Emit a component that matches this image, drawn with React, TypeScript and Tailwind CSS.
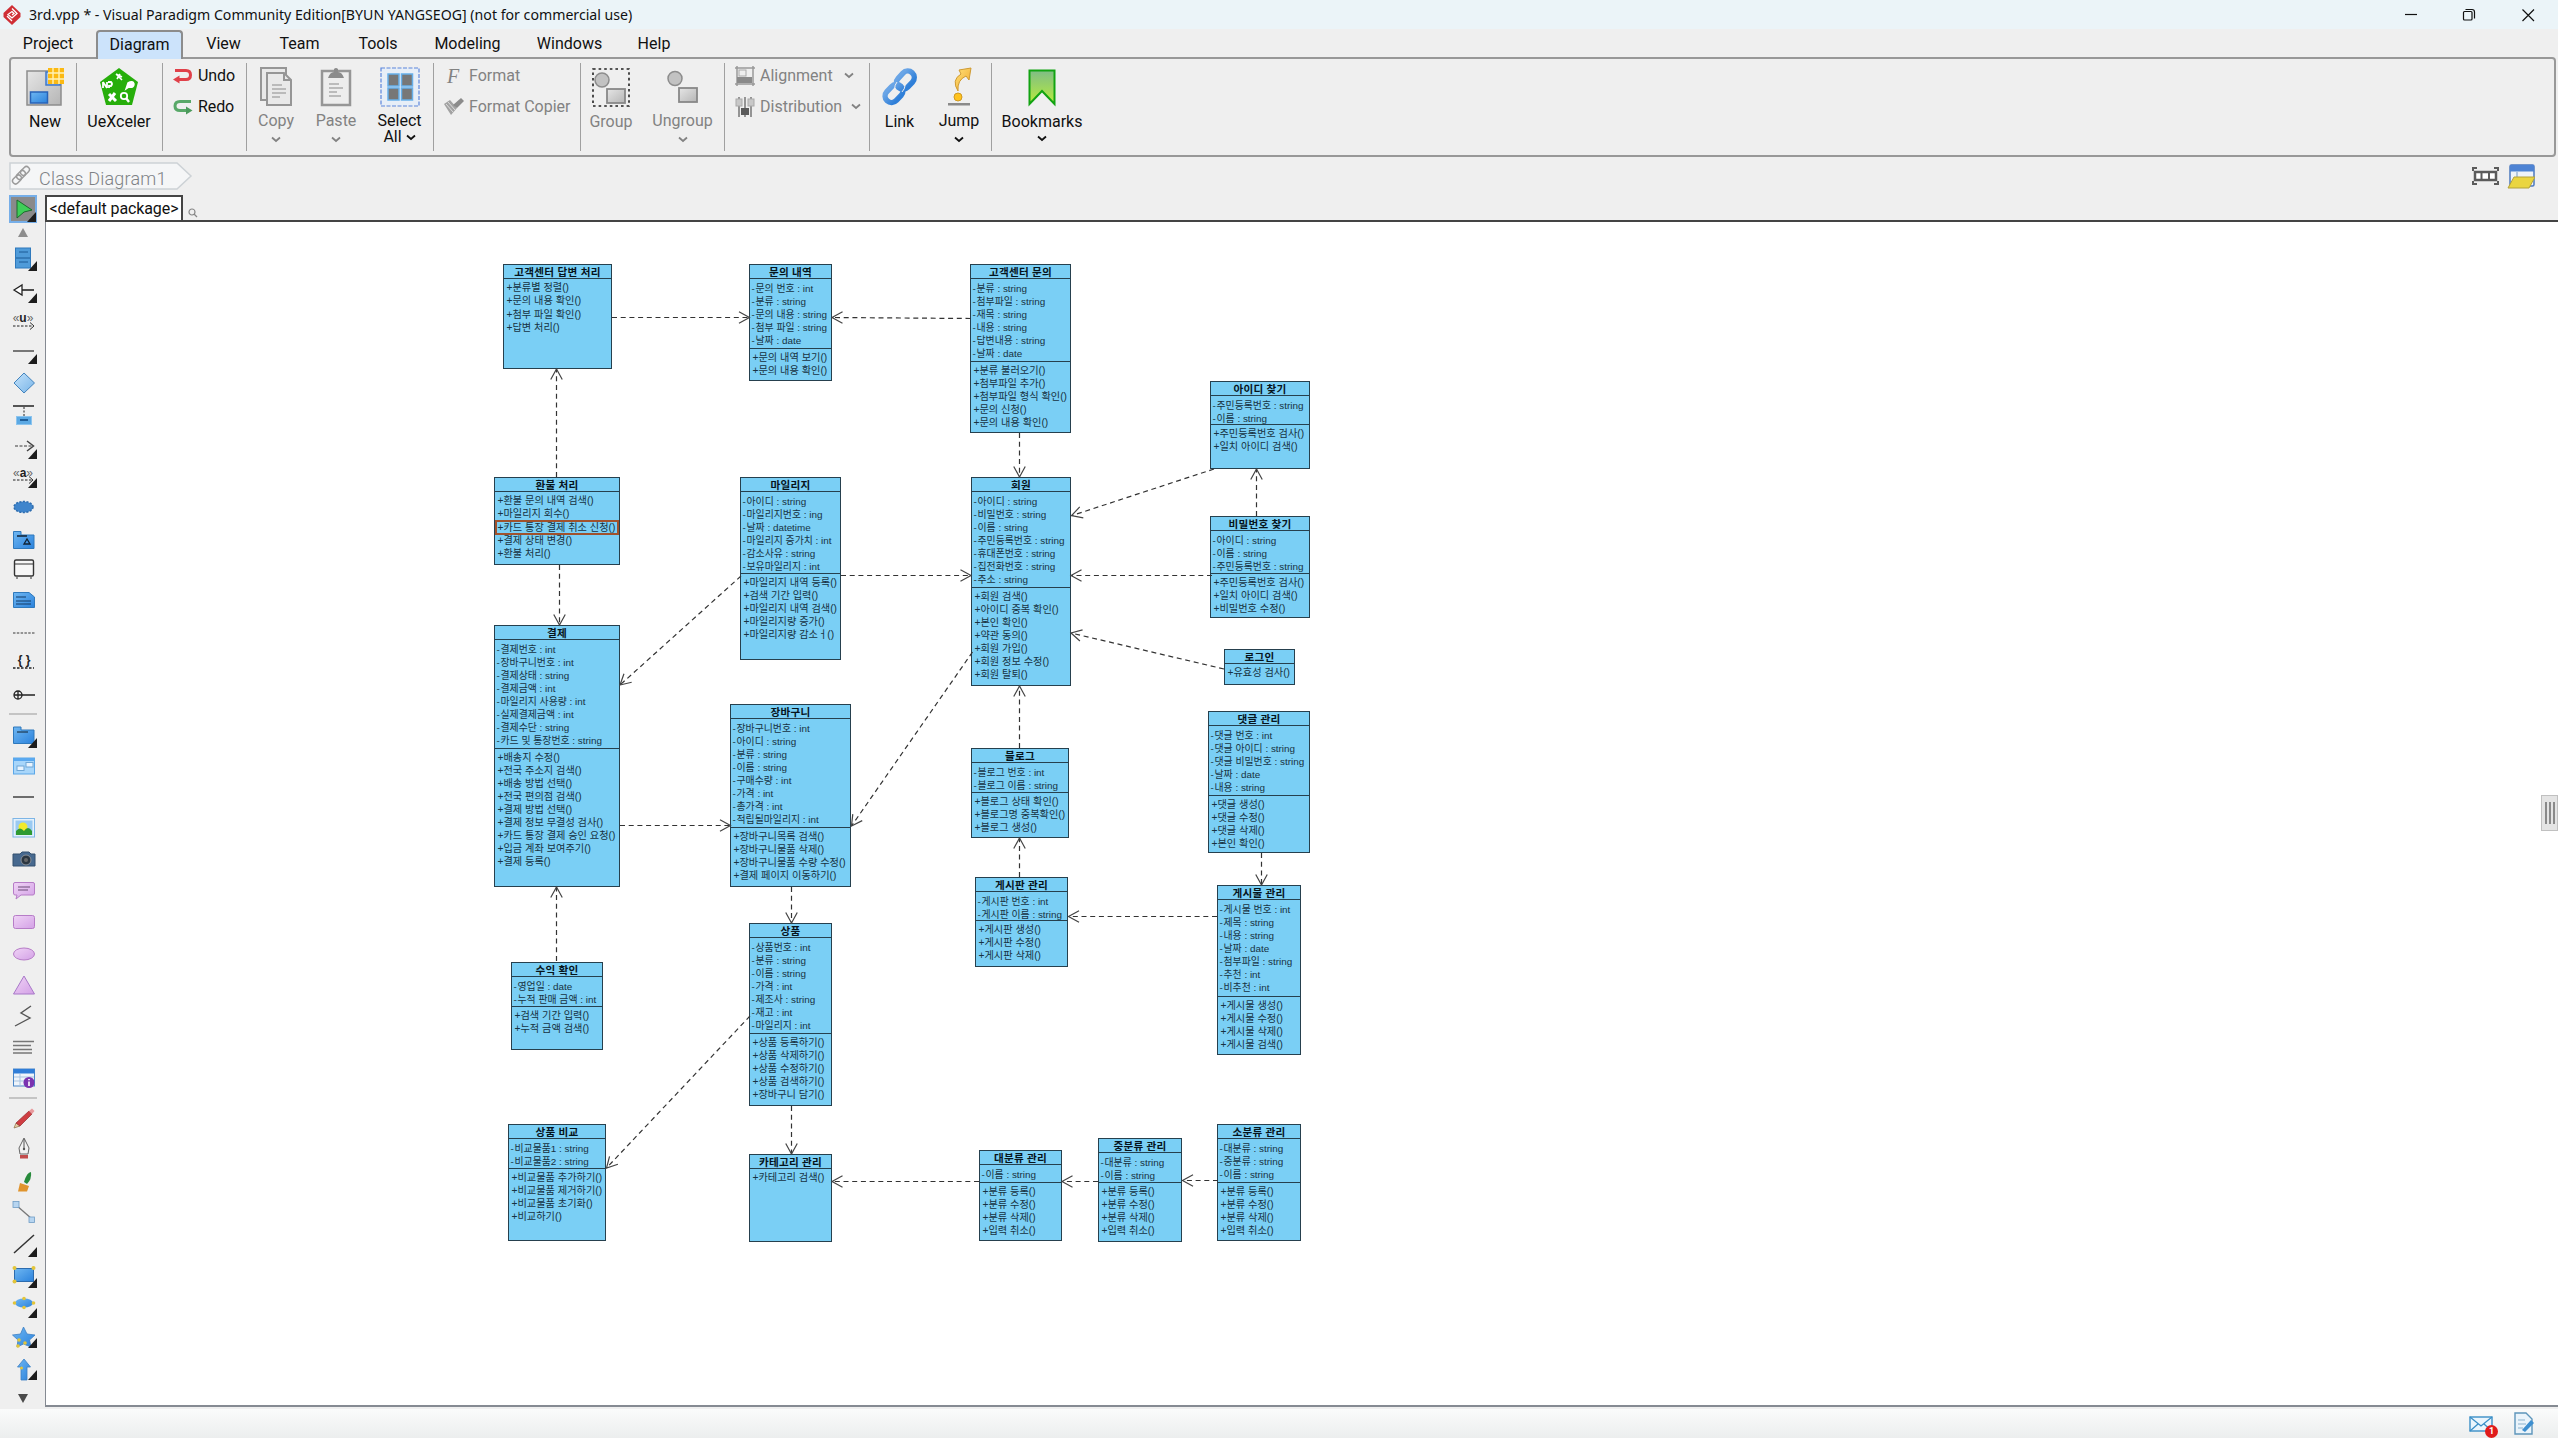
import type { ReactNode } from "react";

/* ---------- Class diagram data ---------- */

type Cls = {
  x: number; y: number; r: number; b: number; sep?: number;
  title: string; attrs: string[]; ops: string[]; selected?: number;
};

const classes: Cls[] = [
  { x: 502.7, y: 264, r: 612.3, b: 368.7, title: "고객센터 답변 처리", attrs: [], ops: ["분류별 정렬()", "문의 내용 확인()", "첨부 파일 확인()", "답변 처리()"] },
  { x: 749.3, y: 264, r: 832, b: 381, sep: 348.3, title: "문의 내역", attrs: ["문의 번호 : int", "분류 : string", "문의 내용 : string", "첨부 파일 : string", "날짜 : date"], ops: ["문의 내역 보기()", "문의 내용 확인()"] },
  { x: 494, y: 477, r: 619.7, b: 564.7, title: "환불 처리", attrs: [], ops: ["환불 문의 내역 검색()", "마일리지 회수()", "카드 통장 결제 취소 신청()", "결제 상태 변경()", "환불 처리()"], selected: 2 },
  { x: 740.3, y: 477, r: 841, b: 659.7, sep: 573.3, title: "마일리지", attrs: ["아이디 : string", "마일리지번호 : ing", "날짜 : datetime", "마일리지 증가치 : int", "감소사유 : string", "보유마일리지 : int"], ops: ["마일리지 내역 등록()", "검색 기간 입력()", "마일리지 내역 검색()", "마일리지량 증가()", "마일리지량 감소ㅓ()"] },
  { x: 494, y: 625.3, r: 619.7, b: 887, sep: 748.3, title: "결제", attrs: ["결제번호 : int", "장바구니번호 : int", "결제상태 : string", "결제금액 : int", "마일리지 사용량 : int", "실제결제금액 : int", "결제수단 : string", "카드 및 통장번호 : string"], ops: ["배송지 수정()", "전국 주소지 검색()", "배송 방법 선택()", "전국 편의점 검색()", "결제 방법 선택()", "결제 정보 무결성 검사()", "카드 통장 결제 승인 요청()", "입금 계좌 보여주기()", "결제 등록()"] },
  { x: 730.3, y: 704.3, r: 851, b: 887, sep: 826.7, title: "장바구니", attrs: ["장바구니번호 : int", "아이디 : string", "분류 : string", "이름 : string", "구매수량 : int", "가격 : int", "총가격 : int", "적립될마일리지 : int"], ops: ["장바구니목록 검색()", "장바구니물품 삭제()", "장바구니물품 수량 수정()", "결제 페이지 이동하기()"] },
  { x: 511.3, y: 961.7, r: 603.3, b: 1049.7, sep: 1005.7, title: "수익 확인", attrs: ["영업일 : date", "누적 판매 금액 : int"], ops: ["검색 기간 입력()", "누적 금액 검색()"] },
  { x: 749.3, y: 922.7, r: 832, b: 1105.7, sep: 1033.3, title: "상품", attrs: ["상품번호 : int", "분류 : string", "이름 : string", "가격 : int", "제조사 : string", "재고 : int", "마일리지 : int"], ops: ["상품 등록하기()", "상품 삭제하기()", "상품 수정하기()", "상품 검색하기()", "장바구니 담기()"] },
  { x: 970.3, y: 264, r: 1071, b: 433.3, sep: 360.7, title: "고객센터 문의", attrs: ["분류 : string", "첨부파일 : string", "재목 : string", "내용 : string", "답변내용 : string", "날짜 : date"], ops: ["분류 불러오기()", "첨부파일 추가()", "첨부파일 형식 확인()", "문의 신청()", "문의 내용 확인()"] },
  { x: 971.3, y: 477, r: 1071, b: 685.7, sep: 586.7, title: "회원", attrs: ["아이디 : string", "비밀번호 : string", "이름 : string", "주민등록번호 : string", "휴대폰번호 : string", "집전화번호 : string", "주소 : string"], ops: ["회원 검색()", "아이디 중복 확인()", "본인 확인()", "약관 동의()", "회원 가입()", "회원 정보 수정()", "회원 탈퇴()"] },
  { x: 1210.3, y: 380.7, r: 1309.7, b: 468.7, sep: 424.3, title: "아이디 찾기", attrs: ["주민등록번호 : string", "이름 : string"], ops: ["주민등록번호 검사()", "일치 아이디 검색()"] },
  { x: 1210.3, y: 515.7, r: 1309.7, b: 618.3, sep: 573.3, title: "비밀번호 찾기", attrs: ["아이디 : string", "이름 : string", "주민등록번호 : string"], ops: ["주민등록번호 검사()", "일치 아이디 검색()", "비밀번호 수정()"] },
  { x: 1223.7, y: 649.3, r: 1294.7, b: 684.7, title: "로그인", attrs: [], ops: ["유효성 검사()"] },
  { x: 1207.7, y: 710.7, r: 1309.7, b: 853, sep: 794.7, title: "댓글 관리", attrs: ["댓글 번호 : int", "댓글 아이디 : string", "댓글 비밀번호 : string", "날짜 : date", "내용 : string"], ops: ["댓글 생성()", "댓글 수정()", "댓글 삭제()", "본인 확인()"] },
  { x: 1217.3, y: 885.2, r: 1300.7, b: 1054.5, sep: 995.7, title: "게시물 관리", attrs: ["게시물 번호 : int", "제목 : string", "내용 : string", "날짜 : date", "첨부파일 : string", "추천 : int", "비추천 : int"], ops: ["게시물 생성()", "게시물 수정()", "게시물 삭제()", "게시물 검색()"] },
  { x: 971.3, y: 748, r: 1069.3, b: 838.2, sep: 791.6, title: "블로그", attrs: ["블로그 번호 : int", "블로그 이름 : string"], ops: ["블로그 상태 확인()", "블로그명 중복확인()", "블로그 생성()"] },
  { x: 975, y: 876.8, r: 1068.3, b: 967, sep: 920.4, title: "게시판 관리", attrs: ["게시판 번호 : int", "게시판 이름 : string"], ops: ["게시판 생성()", "게시판 수정()", "게시판 삭제()"] },
  { x: 507.7, y: 1124, r: 606.3, b: 1241, sep: 1168.3, title: "상품 비교", attrs: ["비교물품1 : string", "비교물품2 : string"], ops: ["비교물품 추가하기()", "비교물품 제거하기()", "비교물품 초기화()", "비교하기()"] },
  { x: 749.3, y: 1154.3, r: 832, b: 1242.3, title: "카테고리 관리", attrs: [], ops: ["카테고리 검색()"] },
  { x: 979, y: 1150, r: 1062, b: 1240.6, sep: 1181.5, title: "대분류 관리", attrs: ["이름 : string"], ops: ["분류 등록()", "분류 수정()", "분류 삭제()", "입력 취소()"] },
  { x: 1098, y: 1138, r: 1182.3, b: 1241.6, sep: 1181.5, title: "중분류 관리", attrs: ["대분류 : string", "이름 : string"], ops: ["분류 등록()", "분류 수정()", "분류 삭제()", "입력 취소()"] },
  { x: 1217.3, y: 1123.7, r: 1300.7, b: 1240.6, sep: 1181.5, title: "소분류 관리", attrs: ["대분류 : string", "중분류 : string", "이름 : string"], ops: ["분류 등록()", "분류 수정()", "분류 삭제()", "입력 취소()"] },
];

/* Dependencies as [fromX, fromY, toX, toY]; the open arrowhead is at the end. */
const links: [number, number, number, number][] = [
  [612, 317.5, 749.5, 317.5], [970.5, 318.5, 832, 317.5], [556.5, 477, 556.5, 369], [559.5, 565, 559.5, 625],
  [741, 576, 620, 685], [841, 575.5, 971, 575.5], [1019.5, 433, 1019.5, 477], [1214, 469, 1071.5, 515.7],
  [1212, 575.5, 1071, 575.5], [1224, 669, 1071, 633], [1256.5, 516, 1256.5, 469], [972.5, 652, 851.5, 826],
  [620, 825.5, 730.5, 825.5], [791.5, 887, 791.5, 923], [556.5, 961, 556.5, 887], [750, 1016, 606.5, 1168],
  [791.5, 1106, 791.5, 1154], [1019.5, 748, 1019.5, 686], [1019.5, 877, 1019.5, 838], [1261.5, 853, 1261.5, 885],
  [1217, 916.5, 1068.5, 916.5], [979, 1181.5, 832, 1181.5], [1098, 1181.5, 1062, 1181.5], [1218, 1180.5, 1182.5, 1180.5],
];

/* The canvas area begins right of the tool palette and below the package bar. */
const OX = 46;
const OY = 222;

function Row({ sign, text, selected }: { sign: string; text: string; selected?: boolean }) {
  const attr = sign === "-";
  return (
    <div className={`relative flex h-[13.07px] items-center whitespace-pre leading-none text-[#173242] ${attr ? "pl-[1.5px] text-[9.9px]" : "pl-[1.5px] text-[10.2px]"} ${selected ? "outline-2 -outline-offset-1 outline-[#a0522d]" : ""}`}>
      <span className={attr ? "w-[4px] shrink-0" : "w-[6px] shrink-0"}>{sign}</span>
      <span>{text}</span>
    </div>
  );
}

function ClassBox({ c }: { c: Cls }) {
  const x = Math.round(c.x), y = Math.round(c.y);
  return (
    <div
      className="absolute flex flex-col border border-[#26404e] bg-[#7acff5]"
      style={{ left: x - OX, top: y - OY, width: Math.round(c.r) - x, height: Math.round(c.b) - y }}
    >
      <div className="flex h-[14px] shrink-0 items-center justify-center whitespace-pre border-b border-[#26404e] pt-[1.5px] text-[10.6px] font-bold leading-none tracking-[0.25px] text-[#06141c]">{c.title}</div>
      {c.sep !== undefined && (
        <div className="shrink-0 border-b border-[#26404e] pt-[3px]" style={{ height: Math.round(c.sep) - y - 14 }}>
          {c.attrs.map((a) => <Row key={a} sign="-" text={a} />)}
        </div>
      )}
      <div className={c.sep === undefined ? "px-px pt-[3px]" : "px-px pt-[2.5px]"}>
        {c.ops.map((o, i) => <Row key={o} sign="+" text={o} selected={i === c.selected} />)}
      </div>
    </div>
  );
}

function Connectors() {
  return (
    <svg className="pointer-events-none absolute left-0 top-0" width="1400" height="1180" viewBox={`${OX} ${OY} 1400 1180`} fill="none" stroke="#333" strokeWidth="1.2">
      {links.map(([x1, y1, x2, y2], i) => {
        const a = Math.atan2(y2 - y1, x2 - x1);
        const p = (d: number) => `${x2 - 12 * Math.cos(a + d)} ${y2 - 12 * Math.sin(a + d)}`;
        return (
          <g key={i}>
            <path d={`M${x1} ${y1}L${x2} ${y2}`} strokeDasharray="5 3.7" />
            <path d={`M${p(0.5)}L${x2} ${y2}L${p(-0.5)}`} stroke="#444" />
          </g>
        );
      })}
    </svg>
  );
}

/* ---------- Tool palette ---------- */

const corner = <path d="M13 -1V9H4Z" transform="translate(0 4)" fill="#1c1c1c" />;
const blue = "url(#blue)";
const pink = "url(#pink)";

const tools: { y: number; icon: ReactNode }[] = [
  { y: 209, icon: <><rect x="-14" y="-13" width="26" height="26" fill="#8a8a8a" stroke="#76aee8" strokeWidth="2" /><path d="M-7 -9L8 1L0 3L-7 9Z" fill="#3fce58" stroke="#1c6b2c" /><path d="M12 3V13H3Z" fill="#1c1c1c" /></> },
  { y: 232.7, icon: <path d="M-6 4L-1 -5L4 4Z" fill="#8d8d8d" /> },
  { y: 258, icon: <><rect x="-8.500" y="-10" width="15" height="20" fill="#4f9bd9" stroke="#2f79bc" /><path d="M-8 0H6M-5 -6H4M-5 4H4" stroke="#1c5b96" />{corner}</> },
  { y: 289.6, icon: <><path d="M-2 0H10" stroke="#222" strokeWidth="1.600" /><path d="M-10 0L-2 -5V5Z" fill="#fff" stroke="#222" strokeWidth="1.300" />{corner}</> },
  { y: 319.6, icon: <><text x="-1" y="2" textAnchor="middle" fontSize="12" fontWeight="700" fill="#222" fontFamily="Liberation Sans, sans-serif"><tspan fontWeight="400" fill="#666">«</tspan>u<tspan fontWeight="400" fill="#666">»</tspan></text><path d="M-11 6H9" stroke="#222" strokeDasharray="2.500 1.500" /><path d="M6 2.500L10 6L6 9.500" fill="none" stroke="#333" /></> },
  { y: 351, icon: <><path d="M-11 0H10" stroke="#777" strokeWidth="2" />{corner}</> },
  { y: 383, icon: <path d="M-10 0L0 -10L10.500 0L0 10Z" fill="url(#sky)" stroke="#4283bd" /> },
  { y: 415, icon: <><path d="M-11 -9H10" stroke="#222" strokeWidth="1.500" /><path d="M0 -8V2" stroke="#222" strokeDasharray="2 1.500" /><rect x="-7.500" y="1.500" width="15" height="8" fill="#5ba9e4" stroke="#8cc4ee" /><rect x="-4" y="4" width="8" height="2" fill="#1f5e99" /></> },
  { y: 446, icon: <><path d="M-9 0H8" stroke="#777" strokeDasharray="3 1.500" strokeWidth="1.300" /><path d="M3 -5L9.500 0L3 5" fill="none" stroke="#444" strokeWidth="1.500" />{corner}</> },
  { y: 475, icon: <><text x="-1" y="2" textAnchor="middle" fontSize="12" fontWeight="700" fill="#222" fontFamily="Liberation Sans, sans-serif"><tspan fontWeight="400" fill="#666">«</tspan>a<tspan fontWeight="400" fill="#666">»</tspan></text><path d="M-11 5H9" stroke="#222" strokeDasharray="2.500 1.500" /><path d="M5 1.500L9 5L5 8.500" fill="none" stroke="#333" />{corner}</> },
  { y: 507, icon: <ellipse cx="-.500" rx="9.500" ry="5.500" fill="#3f85cc" stroke="#2d6cae" strokeDasharray="2 1.500" strokeWidth="1.500" /> },
  { y: 540, icon: <><path d="M-10.500 -8.500H-3V-5H10V8.500H-10.500Z" fill={blue} stroke="#2f79bc" /><path d="M-7 -4H3M0 4L3 -1L6 4Z" stroke="#123" fill="none" strokeWidth="1.300" /></> },
  { y: 569.5, icon: <><rect x="-9.500" y="-9" width="19" height="16" rx="1.500" fill="#f7f7f7" stroke="#333" strokeWidth="1.400" /><path d="M-9 -5H9M-6 9H-8M6 9H8" stroke="#333" /></> },
  { y: 600, icon: <><path d="M-10.500 -7.500H5L10.500 -3V7.500H-10.500Z" fill={blue} stroke="#2f79bc" /><path d="M-8 -3H2M-8 1H7M-8 4H7" stroke="#123b66" /></> },
  { y: 632.7, icon: <path d="M-11 0H11" stroke="#777" strokeWidth="1.300" strokeDasharray="2.500 1.300" /> },
  { y: 661, icon: <><text x="0" y="3" textAnchor="middle" fontSize="12" fontWeight="700" fill="#222" fontFamily="Liberation Sans, sans-serif">{"{ }"}</text><path d="M-11 7H10" stroke="#222" strokeWidth="1.300" strokeDasharray="2.500 1.500" /></> },
  { y: 695, icon: <><circle cx="-6" r="4" fill="none" stroke="#222" strokeWidth="1.300" /><path d="M-10 0H11M-6 -4V4" stroke="#222" strokeWidth="1.300" /></> },
  { y: 714.5, icon: <path d="M-15 0H13" stroke="#c4c4c4" strokeWidth="2" /> },
  { y: 735.5, icon: <><path d="M-10.500 -8H-3V-5H10V8.500H-10.500Z" fill={blue} stroke="#2f79bc" /><path d="M-7 -3H4" stroke="#123" />{corner}</> },
  { y: 766, icon: <><rect x="-10.500" y="-8" width="21" height="16" fill="#a8d6fa" stroke="#5ba7e8" /><rect x="-10" y="-8" width="20" height="3" fill="#5aa9f0" /><rect x="-7" y="0" width="7" height="4.500" fill="#e8f4ff" stroke="#6ea6d5" /><rect x="2" y="-3.500" width="7" height="4.500" fill="#e8f4ff" stroke="#6ea6d5" /></> },
  { y: 796.7, icon: <path d="M-11 0H10" stroke="#555" strokeWidth="1.700" /> },
  { y: 828.4, icon: <><rect x="-11" y="-9.500" width="21.500" height="18.500" fill="#e4f1fc" stroke="#7db5e6" /><rect x="-8.500" y="-7.500" width="17" height="14.500" fill="#9acaf2" /><circle cx="-1" cy="-1" r="4.500" fill="#f1ea2c" /><path d="M-8 7V3Q-4 -2 0 3Q4 -3 8 3V7Z" fill="#2f9a32" /></> },
  { y: 859.4, icon: <><path d="M-11 -5H-4L-2 -7H5L7 -5H11V7H-11Z" fill="#47698f" stroke="#34506f" /><circle cx="2" cy="1" r="5" fill="#2b3640" stroke="#8a9098" /><circle cx="2" cy="1" r="2" fill="#666" /></> },
  { y: 890.4, icon: <><path d="M-9 -7.500H9Q10.500 -7.500 10.500 -6V3Q10.500 5 9 5H-3L-8 9L-7 5H-9Q-10.500 5 -10.500 3V-6Q-10.500 -7.500 -9 -7.500Z" fill={pink} stroke="#b67cc7" /><path d="M-6 -3H6M-6 0H4" stroke="#6b4a77" /></> },
  { y: 921.8, icon: <rect x="-10.500" y="-6.500" width="21" height="13" rx="2" fill={pink} stroke="#b67cc7" /> },
  { y: 953.6, icon: <ellipse rx="10.500" ry="6" fill={pink} stroke="#b67cc7" /> },
  { y: 985, icon: <path d="M0 -9L10.500 9H-10.500Z" fill={pink} stroke="#a878c8" /> },
  { y: 1016, icon: <path d="M7 -10L-3 -3L6 2L-9 10" fill="none" stroke="#555" strokeWidth="1.400" /> },
  { y: 1047, icon: <path d="M-11 -5.500H10M-11 -1.500H7M-11 2.500H8M-11 6H8" stroke="#777" strokeWidth="1.300" /> },
  { y: 1078.4, icon: <><rect x="-10.500" y="-9" width="21" height="17" fill="#eef4fb" stroke="#4a86c8" /><rect x="-10.500" y="-9" width="21" height="4.500" fill="#2f7dd8" /><path d="M-10 -1H10M-10 3H10M-4 -4V8" stroke="#a9c3df" /><circle cx="5" cy="4.500" r="5.500" fill="#7b33b0" /><path d="M5 3.500V8M5 1V2.300" stroke="#fff" strokeWidth="1.600" /></> },
  { y: 1098, icon: <path d="M-15 0H13" stroke="#c4c4c4" strokeWidth="2" /> },
  { y: 1118.5, icon: <><path d="M-10 10L-8 5L-4 8Z" fill="#e6cfa6" stroke="#8a6b45" strokeWidth=".7" /><path d="M-8 5L5 -7L8 -4L-4 8Z" fill="#cf3d42" stroke="#94292d" strokeWidth=".7" /><path d="M5 -7L8 -9.500L10.500 -7L8 -4Z" fill="#e89a9d" /></> },
  { y: 1149.5, icon: <><path d="M-4 5L-5 -1L0 -11L5 -1L4 5Z" fill="#f2f2f2" stroke="#666" /><path d="M0 -10V0" stroke="#555" /><circle r="1.200" fill="#555" /><rect x="-4" y="6" width="8" height="3.500" fill="#c14b4b" /></> },
  { y: 1181.7, icon: <><path d="M0 0Q3 -10 7 -10Q8 -3 3 2Z" fill="#278a3b" /><path d="M-4 1L5 4L3 9.500L-6 9.500Z" fill="#e0942d" /></> },
  { y: 1212, icon: <><path d="M-8 -7L8 7" stroke="#777" strokeWidth="1.300" /><rect x="-11" y="-10.500" width="6" height="6" fill="#b7d5f0" stroke="#6f9cc5" strokeWidth=".8" /><rect x="5" y="5" width="5.500" height="5.500" fill="#b7d5f0" stroke="#6f9cc5" strokeWidth=".8" /></> },
  { y: 1244.5, icon: <><path d="M-10 9L10 -9" stroke="#333" strokeWidth="1.500" />{corner}</> },
  { y: 1275, icon: <><rect x="-9.500" y="-6.500" width="19" height="13" fill={blue} stroke="#2d6cae" /><g fill="#e3c53a"><circle cx="-9.500" cy="-7" r="2" /><circle cx="9.500" cy="-7" r="2" /><circle cx="-9.500" cy="6.500" r="2" /></g>{corner}</> },
  { y: 1303.6, icon: <><ellipse rx="9" ry="4.500" fill={blue} /><g fill="#e3c53a"><circle cx="-9.500" r="1.800" /><circle cx="9.500" r="1.800" /><circle cy="-4.500" r="1.800" /><circle cy="4.500" r="1.800" /></g><g transform="translate(0 2)">{corner}</g></> },
  { y: 1338, icon: <><path d="M-.500 -11L3 -4L11 -3L5.500 2L7 9L-.500 6L-7 9L-6 2L-11.500 -3L-3.500 -4Z" fill={blue} stroke="#3b7fc4" strokeWidth=".8" /><g fill="#e3c53a"><circle cx="-6" cy="8" r="1.800" /><circle cx="-5" cy="2" r="1.800" /><circle cx="1" cy="5" r="1.800" /></g><g transform="translate(0 -3)">{corner}</g></> },
  { y: 1370.6, icon: <><path d="M0 -11L6.500 -3H3V10H-3V-3H-6.500Z" fill={blue} stroke="#3b7fc4" strokeWidth=".8" /><circle cx="-2.500" cy="-2" r="1.500" fill="#e3c53a" /><g transform="translate(0 -3)">{corner}</g></> },
  { y: 1398, icon: <path d="M-6 -4H4L-1 5Z" fill="#4a4a4a" /> },
];

function Palette() {
  return (
    <div className="flex w-[45px] shrink-0 flex-col overflow-hidden pl-[9.5px]">
      {tools.map((t, i) => (
        <svg key={t.y} className="shrink-0 overflow-visible" style={{ marginTop: i === 0 ? t.y - 203 : t.y - tools[i - 1].y - 16 }} width="28" height="16" viewBox="-14 -8 28 16">
          {t.icon}
        </svg>
      ))}
    </div>
  );
}

/* ---------- Ribbon ---------- */

function Chevron({ className = "" }: { className?: string }) {
  return (
    <svg className={`inline-block shrink-0 ${className}`} width="10" height="7" viewBox="0 0 10 7" fill="none" stroke="currentColor" strokeWidth="1.800">
      <path d="M1 1.500L5 5L9 1.500" />
    </svg>
  );
}

function Group({ w, children }: { w: string; children?: ReactNode }) {
  return (
    <div className={`my-1 flex shrink-0 border-r border-[#a0a0a0] ${w}`}>{children}</div>
  );
}

function BigButton({ icon, label, w, off, menu, up }: { icon: ReactNode; label: string; w: string; off?: boolean; menu?: boolean; up?: boolean }) {
  return (
    <div className={`flex shrink-0 flex-col items-center pr-[2px] pt-[3px] ${w} ${off ? "text-[#828282]" : "text-[#111]"}`}>
      <div className="flex h-[42px] items-center">{icon}</div>
      <div className={`whitespace-nowrap leading-[20px] ${up ? "mt-[3px]" : "mt-[4px]"}`}>{label}</div>
      {menu && <Chevron className={up ? "mt-[5px]" : "mt-[3px]"} />}
    </div>
  );
}

function SmallButton({ icon, label, off, chevron }: { icon: ReactNode; label: string; off?: boolean; chevron?: string }) {
  return (
    <div className={`flex h-[31px] items-center whitespace-nowrap ${off ? "text-[#828282]" : "text-[#111]"}`}>
      <span className="flex w-[25px] shrink-0 items-center">{icon}</span>
      {label}
      {chevron && <Chevron className={chevron} />}
    </div>
  );
}

const newIcon = (
  <svg width="38" height="40" viewBox="0 0 38 40">
    <rect x="1" y="4" width="34" height="34" fill="url(#gray)" stroke="#8d8d8d" strokeWidth="1.500" />
    <rect x="20" y="5" width="14" height="13" fill="#9cc3f4" stroke="#4078c8" strokeWidth="1.500" />
    <rect x="4.500" y="25" width="17" height="11" fill={blue} stroke="#2863b8" strokeWidth="1.500" />
    <rect x="22" y="1" width="16" height="16" fill="#fbb913" />
    <path d="M22 6H38M22 12H38M27 1V17M33 1V17" stroke="#fff2b8" strokeWidth="1.400" />
  </svg>
);
const ueIcon = (
  <svg width="40" height="40" viewBox="0 0 40 40">
    <path d="M20 1L39 15L33 38H7L1 15Z" fill="#27ae0b" />
    <path d="M17 7L23 13M21 7L18 12M17 7L23 10" stroke="#fff" strokeWidth="1.600" />
    <path d="M4 15V21M4 15L8 21M8 15V21M9 15H12Q14 17 12 19H10V21" fill="none" stroke="#fff" strokeWidth="1.800" />
    <path d="M27 22L29 16Q34 13 35 17Q35 21 30 20Z" fill="#fff" stroke="#fff" strokeWidth="1.500" />
    <path d="M10 27L17 34M16 26L10 34" stroke="#fff" strokeWidth="3" />
    <circle cx="25" cy="29" r="3.200" fill="none" stroke="#fff" strokeWidth="1.800" />
    <path d="M27 31L30 35" stroke="#fff" strokeWidth="2.400" />
  </svg>
);
const copyIcon = (
  <svg width="32" height="40" viewBox="0 0 32 40" fill="#e9e9e9" stroke="#969696" strokeWidth="2">
    <path d="M1 1H26V33H1Z" />
    <path d="M7 6H24L31 13V38H7Z" />
    <path d="M24 6V13H31" fill="none" />
    <path d="M12 18H22M12 22H26M12 26H26M12 30H20" stroke="#aaa" strokeWidth="1.500" />
  </svg>
);
const pasteIcon = (
  <svg width="32" height="40" viewBox="0 0 32 40">
    <rect x="2" y="4" width="28" height="34" fill="#ededed" stroke="#969696" strokeWidth="2.500" />
    <path d="M8 11Q10 5 14 5V2Q16 0 18 2V5Q22 5 24 11Z" fill="#8b8b8b" />
    <path d="M9 17H19M9 21H23M9 25H17M9 29H21" stroke="#aaa" strokeWidth="1.500" />
  </svg>
);
const selectIcon = (
  <svg width="40" height="40" viewBox="0 0 40 40">
    <rect x="1" y="1" width="38" height="38" fill="#e7eef7" stroke="#5c86dc" strokeWidth="1.200" strokeDasharray="4 1.500" />
    <g fill="#777" stroke="#67b0ea" strokeWidth="1.500">
      <rect x="8" y="7" width="11" height="12" /><rect x="21.500" y="7" width="11" height="12" />
      <rect x="8" y="21" width="11" height="12" /><rect x="21.500" y="21" width="11" height="12" />
    </g>
  </svg>
);
const groupIcon = (
  <svg width="40" height="40" viewBox="0 0 40 40">
    <rect x="2" y="2" width="36" height="37" fill="none" stroke="#222" strokeWidth="1.600" strokeDasharray="2.600 3" />
    <circle cx="11" cy="13" r="7" fill="#c2c2c2" stroke="#8d8d8d" strokeWidth="1.500" />
    <rect x="16" y="22" width="18" height="14" fill="url(#gray)" stroke="#888" strokeWidth="1.800" />
  </svg>
);
const ungroupIcon = (
  <svg width="34" height="40" viewBox="0 0 34 40">
    <circle cx="9" cy="11.500" r="7" fill="#c2c2c2" stroke="#8d8d8d" strokeWidth="1.500" />
    <rect x="13" y="21" width="18" height="14" fill="url(#gray)" stroke="#888" strokeWidth="1.800" />
  </svg>
);
const linkIcon = (
  <svg width="38" height="40" viewBox="0 0 38 40" fill="none" stroke="url(#linkfill)" strokeWidth="5.500">
    <rect x="-9.500" y="-6.500" width="20" height="13" rx="6.500" transform="translate(24 13.500) rotate(-47)" />
    <rect x="-10" y="-6.500" width="20" height="13" rx="6.500" transform="translate(13 26.500) rotate(-47)" />
    <path d="M16 15Q11 22 17 25" stroke="#f0f0f0" strokeWidth="1" />
    <path d="M21 25Q27 18 21 14" stroke="#f0f0f0" strokeWidth="1" />
  </svg>
);
const jumpIcon = (
  <svg width="26" height="40" viewBox="0 0 26 40">
    <path d="M12 24Q5 13 15 7L13 3L25 1L23 13L20 9Q11 13 12 24Z" fill="url(#gold)" stroke="#cf9a31" />
    <circle cx="12" cy="30" r="4" fill="#ffc31e" stroke="#d09922" />
    <rect x="2" y="36" width="22" height="2.500" fill="#8a8a8a" />
  </svg>
);
const bookmarkIcon = (
  <svg width="28" height="40" viewBox="0 0 28 40">
    <path d="M1.500 3.500H26.500V37L14 24L1.500 37Z" fill="url(#green)" stroke="#12a312" strokeWidth="2" />
  </svg>
);

const undoIcon = (
  <svg width="20" height="16" viewBox="0 0 20 16" fill="none" stroke="#e04049" strokeWidth="3"><path d="M2 2.500H13Q17.500 2.500 17.500 7Q17.500 11.500 13 11.500H5" /><path d="M6.500 7.500V15.500L0 11.500Z" fill="#e04049" stroke="none" /></svg>
);
const redoIcon = (
  <svg width="20" height="16" viewBox="0 0 20 16" fill="none" stroke="#58a868" strokeWidth="3"><path d="M18 2.500H7Q2 2.500 2 7Q2 11.500 7 11.500H14" /><path d="M13 7.500V15.500L19.500 11.500Z" fill="#4b9a5b" stroke="none" /></svg>
);
const brushIcon = (
  <svg width="20" height="18" viewBox="0 0 20 18"><path d="M0 6L6 2L13 10L7 17Z" fill="#a2a2a2" /><path d="M2 6L9 14M4 4L11 12" stroke="#ddd" /><path d="M9 7L17 0L20 3L13 10Z" fill="#8b8b8b" /></svg>
);
const alignIcon = (
  <svg width="20" height="20" viewBox="0 0 20 20"><path d="M2 0V20M18 0V20M0 2H20M0 18H20" stroke="#9a9a9a" strokeWidth="1.500" /><rect x="4" y="4" width="7" height="6" fill="#eee" stroke="#aaa" /><rect x="2" y="11" width="15" height="6" fill="#8a8a8a" /></svg>
);
const distIcon = (
  <svg width="20" height="20" viewBox="0 0 20 20"><path d="M4 0V20M10 0V20M16 0V20" stroke="#777" strokeWidth="1.500" /><rect x="1" y="2" width="6" height="7" fill="#c8c8c8" stroke="#aaa" /><rect x="13" y="2" width="6" height="7" fill="#c8c8c8" stroke="#aaa" /><rect x="6" y="11" width="8" height="7" fill="#5a5a5a" /></svg>
);

function Ribbon() {
  return (
    <div className="ml-[9px] mr-[2px] flex h-[100px] shrink-0 rounded-sm border-2 border-[#989898] text-[16px]">
      <Group w="w-[66px] pl-[2px]"><BigButton w="w-[66px]" icon={newIcon} label="New" /></Group>
      <Group w="w-[86px]"><BigButton w="w-[86px]" icon={ueIcon} label="UeXceler" /></Group>
      <Group w="w-[84px] flex-col pl-[10px] -translate-y-0 tracking-[-0.1px]">
        <div className="-mt-[3px]"><SmallButton icon={undoIcon} label="Undo" /></div>
        <SmallButton icon={redoIcon} label="Redo" />
      </Group>
      <Group w="w-[187px]">
        <BigButton w="w-[60px]" icon={copyIcon} label="Copy" off menu up />
        <BigButton w="w-[60px]" icon={pasteIcon} label="Paste" off menu up />
        <div className="flex w-[65px] flex-col items-center pt-[3px] text-[#111]">
          <div className="flex h-[42px] items-center">{selectIcon}</div>
          <div className="mt-[3px] leading-[20px]">Select</div>
          <div className="-mt-[4px] flex items-center gap-1 leading-[20px]">All <Chevron /></div>
        </div>
      </Group>
      <Group w="w-[147px] flex-col pl-[10px]">
        <div className="-mt-[3px]"><SmallButton off icon={<span className="pl-[3px] font-['Liberation_Serif',serif] text-[20px] italic">F</span>} label="Format" /></div>
        <SmallButton off icon={brushIcon} label="Format Copier" />
      </Group>
      <Group w="w-[144px]">
        <BigButton w="w-[62px]" icon={groupIcon} label="Group" off />
        <BigButton w="w-[81px]" icon={ungroupIcon} label="Ungroup" off menu up />
      </Group>
      <Group w="w-[145px] flex-col pl-[10px]">
        <div className="-mt-[3px]"><SmallButton off icon={alignIcon} label="Alignment" chevron="ml-[11px]" /></div>
        <SmallButton off icon={distIcon} label="Distribution" chevron="ml-[9px]" />
      </Group>
      <Group w="w-[122px]">
        <BigButton w="w-[61px]" icon={linkIcon} label="Link" />
        <BigButton w="w-[58px]" icon={jumpIcon} label="Jump" menu up />
      </Group>
      <BigButton w="w-[102px] mt-1" icon={bookmarkIcon} label="Bookmarks" menu />
    </div>
  );
}

function TitleBar() {
  return (
    <div className="flex h-[29px] shrink-0 items-center bg-[#ebf4f8] font-['Noto_Sans','Open_Sans',sans-serif] text-[14.15px] text-[#111]">
      <svg className="ml-[3px]" width="18" height="20" viewBox="0 0 18 20">
        <path d="M9 0L17.500 8V12L9 20L.500 12V8Z" fill="#cf2e35" />
        <path d="M9 3.500L14 8.500L9 13L5 9.500L9 6.500L11 8.500L9 10M4 11L9 16" fill="none" stroke="#fff" strokeWidth="1.300" />
      </svg>
      <span className="ml-[8px] flex-1 whitespace-pre">3rd.vpp * - Visual Paradigm Community Edition[BYUN YANGSEOG] (not for commercial use)</span>
      <svg className="mr-[23px]" width="130" height="14" viewBox="0 0 130 14" fill="none" stroke="#111" strokeWidth="1.200">
        <path d="M0 6.500H12" />
        <rect x="58.500" y="3.500" width="8.500" height="8.500" rx="1" />
        <path d="M60.500 1.500H67Q69.500 1.500 69.500 4V10.500" />
        <path d="M117.500 1.500L129 13M129 1.500L117.500 13" />
      </svg>
    </div>
  );
}

function Tabs() {
  return (
    <div className="flex h-[28px] shrink-0 items-stretch pt-[2px] text-[16px] text-[#111]">
      <div className="flex w-[96px] items-center justify-center">Project</div>
      <div className="relative z-10 -mb-[2px] -mt-px flex w-[87px] items-center justify-center rounded-t border-2 border-b-0 border-[#8c8c8c] bg-[#cce3fb] pb-px">Diagram</div>
      <div className="flex w-[81px] items-center justify-center">View</div>
      <div className="flex w-[71px] items-center justify-center">Team</div>
      <div className="flex w-[86px] items-center justify-center">Tools</div>
      <div className="flex w-[93px] items-center justify-center">Modeling</div>
      <div className="flex w-[111px] items-center justify-center">Windows</div>
      <div className="flex w-[58px] items-center justify-center">Help</div>
    </div>
  );
}

function Breadcrumb() {
  return (
    <div className="flex h-[38px] shrink-0 items-center justify-between">
      <div className="relative ml-[9px] h-[28px] w-[184px] text-[#7e8286]">
        <svg className="absolute inset-0" width="184" height="28" viewBox="0 0 184 28">
          <path d="M1 1H168L182 14L168 27H1Z" fill="#f5f6f7" stroke="#cdd2d6" strokeWidth="1.500" />
        </svg>
        <div className="relative flex h-full items-center">
          <svg className="mb-[2px] ml-[2px]" width="21" height="21" viewBox="0 0 21 21" fill="none" stroke="#9b9b9b" strokeWidth="1.500">
            <rect x="-5" y="-3" width="10" height="6" rx="3" transform="translate(14 6) rotate(-45)" />
            <rect x="-5" y="-3" width="10" height="6" rx="3" transform="translate(10 10) rotate(-45)" />
            <rect x="-5" y="-3" width="10" height="6" rx="3" transform="translate(6 14.500) rotate(-45)" />
          </svg>
          <span className="ml-[7px] mt-[4px] whitespace-nowrap text-[18px] font-light tracking-[0.2px]">Class Diagram1</span>
        </div>
      </div>
      <div className="mr-[23px] flex items-center gap-[8px]">
        <svg width="27" height="20" viewBox="0 0 27 20" fill="none" stroke="#5b5b5b">
          <path d="M1 5V2H5M22 2H26V5M26 15V18H22M5 18H1V15" strokeWidth="2" />
          <rect x="3" y="6" width="21" height="8" fill="#fff" strokeWidth="2.500" />
          <path d="M9.500 6V14M17 6V14" strokeWidth="2" />
        </svg>
        <svg width="28" height="25" viewBox="0 0 28 25">
          <rect x="3" y="1" width="24" height="21" rx="1.500" fill="#eef3f9" stroke="#4c79bf" strokeWidth="1.500" />
          <rect x="3" y="1" width="24" height="6.500" fill="#4d83d4" />
          <path d="M10 8V14" stroke="#9db7d5" strokeWidth="1.500" />
          <path d="M7 13H28L22 24H1Z" fill="#ead540" stroke="#b3a23a" />
        </svg>
      </div>
    </div>
  );
}

function PackageBar() {
  return (
    <div className="flex h-[27px] shrink-0 border-b-2 border-[#444]">
      <div className="flex w-[138px] items-center justify-center whitespace-nowrap border-2 border-b-0 border-[#444] bg-white text-[16px] tracking-[-0.1px] text-[#111]">&lt;default package&gt;</div>
      <svg className="ml-[5px] mt-[13px]" width="10" height="10" viewBox="0 0 10 10" fill="none" stroke="#888" strokeWidth="1.200"><circle cx="4" cy="4" r="3" /><path d="M6 6L9 9" /></svg>
    </div>
  );
}

function StatusBar() {
  return (
    <div className="flex h-[29px] shrink-0 items-center justify-end gap-[19px] bg-gradient-to-b from-[#fafbfb] to-[#eceeee] pr-[24px]">
      <div className="relative">
        <svg width="26" height="18" viewBox="0 0 26 18"><rect x="1" y="2" width="22" height="14" fill="#eaf5fd" stroke="#3b8fc7" strokeWidth="1.400" /><path d="M1 2L12 11L23 2M1 16L9 9M23 16L15 9" fill="none" stroke="#3b8fc7" strokeWidth="1.300" /></svg>
        <span className="absolute -bottom-[5px] -right-[3px] flex size-[13px] items-center justify-center rounded-full bg-[#e01c1c] text-[9px] font-bold leading-none text-white">1</span>
      </div>
      <svg width="20" height="23" viewBox="0 0 20 23"><path d="M1 1H12L18 7V22H1Z" fill="#eaf4fb" stroke="#5d95bb" strokeWidth="1.400" /><path d="M4 8H11M4 12H12M4 16H9" stroke="#8bb2cd" /><path d="M8 18L17 8L20 11L11 20Z" fill="#3d8fd0" /></svg>
    </div>
  );
}

function Gradients() {
  return (
    <svg className="absolute" width="0" height="0">
      <defs>
        <linearGradient id="blue" x1="0" y1="0" x2="1" y2="1"><stop offset="0" stopColor="#6fb7f2" /><stop offset="1" stopColor="#2b82dc" /></linearGradient>
        <linearGradient id="sky" x1="0" y1="0" x2="1" y2="1"><stop offset="0" stopColor="#c5e3fa" /><stop offset="1" stopColor="#78b4e8" /></linearGradient>
        <linearGradient id="pink" x1="0" y1="0" x2="1" y2="1"><stop offset="0" stopColor="#f0d4f6" /><stop offset="1" stopColor="#d3a0e6" /></linearGradient>
        <linearGradient id="gray" x1="0" y1="0" x2="1" y2="1"><stop offset="0" stopColor="#e6e6e6" /><stop offset="1" stopColor="#b5b5b5" /></linearGradient>
        <linearGradient id="gold" x1="0" y1="0" x2="1" y2="1"><stop offset="0" stopColor="#ffe27a" /><stop offset="1" stopColor="#f0a72c" /></linearGradient>
        <linearGradient id="green" x1="0" y1="0" x2="0" y2="1"><stop offset="0" stopColor="#7fbd86" /><stop offset="1" stopColor="#b8ec3c" /></linearGradient>
        <linearGradient id="linkfill" x1="0" y1="0" x2="0" y2="1"><stop offset="0" stopColor="#6aa5e6" /><stop offset="1" stopColor="#2f7fd8" /></linearGradient>
      </defs>
    </svg>
  );
}

export default function App() {
  return (
    <div className="flex h-[1438px] w-[2558px] flex-col overflow-hidden bg-[#efefef] font-['Roboto','Noto_Sans_CJK_KR',sans-serif]">
      <Gradients />
      <TitleBar />
      <Tabs />
      <Ribbon />
      <Breadcrumb />
      <div className="flex min-h-0 flex-1">
        <Palette />
        <div className="flex min-w-0 flex-1 flex-col">
          <PackageBar />
          <div className="relative mb-[2px] min-h-0 flex-1 overflow-hidden border-b-2 border-l border-[#858a92] bg-white font-['Liberation_Sans','Noto_Sans_CJK_KR',sans-serif]">
            {classes.map((c) => <ClassBox key={c.title} c={c} />)}
            <Connectors />
            <div className="absolute right-0 top-[573px] flex h-[36px] w-[17px] items-center justify-center gap-[2px] border border-[#c0c0c0] bg-[#e4e4e4]">
              <span className="h-[22px] w-[2px] bg-[#8a8a8a]" />
              <span className="h-[22px] w-[2px] bg-[#8a8a8a]" />
              <span className="h-[22px] w-[2px] bg-[#8a8a8a]" />
            </div>
          </div>
        </div>
      </div>
      <StatusBar />
    </div>
  );
}
